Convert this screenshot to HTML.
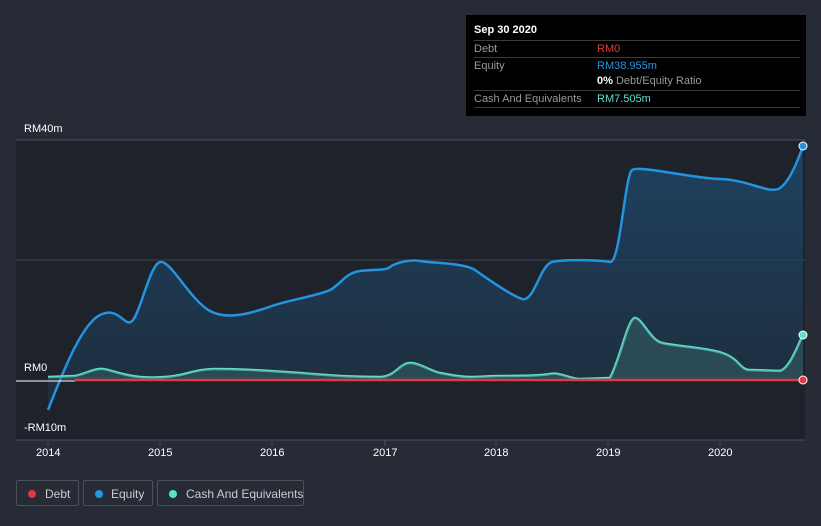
<!DOCTYPE html>
<html><head><style>
body{margin:0;background:#262b36;font-family:"Liberation Sans",sans-serif;}
.wrap{position:relative;width:821px;height:526px;overflow:hidden;background:#262b36;}
.lbl{position:absolute;color:#fff;font-size:11px;}
.tip{position:absolute;left:466px;top:15px;width:340px;height:101px;background:#000;color:#fff;font-size:11px;}
.tip .r{position:absolute;left:8px;right:6px;border-top:1px solid #3a3a3a;height:16px;}
.tip .k{position:absolute;left:0;top:2px;color:#999;}
.tip .v{position:absolute;left:123px;top:2px;}
.leg{position:absolute;top:480px;height:26px;border:1px solid #4a505c;border-radius:2px;color:#ccc;font-size:12px;line-height:26px;box-sizing:border-box;white-space:nowrap;}
.leg i{position:absolute;left:11px;top:9px;width:8px;height:8px;border-radius:50%;}
</style></head><body><div class="wrap">
<svg width="821" height="526" style="position:absolute;left:0;top:0">
<defs><linearGradient id="g" x1="0" y1="0" x2="0" y2="1"><stop offset="0" stop-color="#1e4a6e" stop-opacity=".8"/><stop offset="1" stop-color="#1e3a52" stop-opacity=".5"/></linearGradient></defs>
<rect x="16" y="140" width="789" height="300" fill="#1e222b"/>
<line x1="16" y1="140" x2="805" y2="140" stroke="#4a505c"/>
<line x1="16" y1="260" x2="805" y2="260" stroke="#3a404c"/>
<line x1="16" y1="440" x2="805" y2="440" stroke="#4a505c"/>
<path d="M48,410 C60,380 80,325 100,315 S125,330 133,320 S150,265 160,262 S190,300 210,311 S260,310 275,305 S320,295 330,290 S345,273 360,271 S385,271 390,267 S410,259 420,261 S465,263 475,270 S510,295 522,299 S540,265 552,262 S600,260 610,262 S625,175 632,170 S690,178 720,179 S770,195 780,188 S798,160 803,146 L803,380 L48,380 Z" fill="url(#g)"/>
<path d="M48,410 C60,380 80,325 100,315 S125,330 133,320 S150,265 160,262 S190,300 210,311 S260,310 275,305 S320,295 330,290 S345,273 360,271 S385,271 390,267 S410,259 420,261 S465,263 475,270 S510,295 522,299 S540,265 552,262 S600,260 610,262 S625,175 632,170 S690,178 720,179 S770,195 780,188 S798,160 803,146" fill="none" stroke="#2394df" stroke-width="2.5"/>
<path id="c" d="M48,377 L75,376 C85,374 95,368 103,369 S125,376 140,377 S170,377 180,375 S200,369 215,369 S260,370 300,373 S350,377 380,377 C395,377 400,363 410,363 S430,371 440,373 S460,377 470,377 S490,376 500,376 S540,376 550,374 S570,379 580,379 L610,378 C620,360 628,318 635,318 S650,340 662,343 S710,348 725,354 S740,370 750,370 L780,371 C790,368 798,345 803,335" fill="none" stroke="#5fe0cc" stroke-width="2.5"/>
<path d="M48,377 L75,376 C85,374 95,368 103,369 S125,376 140,377 S170,377 180,375 S200,369 215,369 S260,370 300,373 S350,377 380,377 C395,377 400,363 410,363 S430,371 440,373 S460,377 470,377 S490,376 500,376 S540,376 550,374 S570,379 580,379 L610,378 C620,360 628,318 635,318 S650,340 662,343 S710,348 725,354 S740,370 750,370 L780,371 C790,368 798,345 803,335 L803,380 L48,380 Z" fill="#3a6b6a" fill-opacity=".45"/>
<line x1="16" y1="381" x2="75" y2="381" stroke="#fff" stroke-width="1"/>
<line x1="75" y1="380" x2="803" y2="380" stroke="#e0393e" stroke-width="2.5"/>
<circle cx="803" cy="146" r="4" fill="#2394df" stroke="#fff" stroke-width="1"/>
<circle cx="803" cy="335" r="4" fill="#5fe0cc" stroke="#fff" stroke-width="1"/>
<circle cx="803" cy="380" r="4" fill="#e0393e" stroke="#fff" stroke-width="1"/>
<g stroke="#4a505c"><line x1="48" y1="440" x2="48" y2="446"/><line x1="160" y1="440" x2="160" y2="446"/><line x1="272" y1="440" x2="272" y2="446"/><line x1="385" y1="440" x2="385" y2="446"/><line x1="496" y1="440" x2="496" y2="446"/><line x1="608" y1="440" x2="608" y2="446"/><line x1="720" y1="440" x2="720" y2="446"/></g>
</svg>
<div class="lbl" style="left:24px;top:123px">RM40m</div>
<div class="lbl" style="left:24px;top:362px">RM0</div>
<div class="lbl" style="left:24px;top:422px">-RM10m</div>
<div class="lbl" style="left:36px;top:447px">2014</div>
<div class="lbl" style="left:148px;top:447px">2015</div>
<div class="lbl" style="left:260px;top:447px">2016</div>
<div class="lbl" style="left:373px;top:447px">2017</div>
<div class="lbl" style="left:484px;top:447px">2018</div>
<div class="lbl" style="left:596px;top:447px">2019</div>
<div class="lbl" style="left:708px;top:447px">2020</div>
<div class="tip">
<div style="position:absolute;left:8px;top:9px;font-weight:bold">Sep 30 2020</div>
<div class="r" style="top:25px"><span class="k">Debt</span><span class="v" style="color:#e0393e">RM0</span></div>
<div class="r" style="top:42px"><span class="k">Equity</span><span class="v" style="color:#2394df">RM38.955m</span></div>
<div style="position:absolute;left:131px;top:60px"><b>0%</b> <span style="color:#999">Debt/Equity Ratio</span></div>
<div class="r" style="top:75px"><span class="k">Cash And Equivalents</span><span class="v" style="color:#5fe0cc">RM7.505m</span></div>
<div class="r" style="top:92px"></div>
</div>
<div class="leg" style="left:16px;width:63px"><i style="background:#e0393e"></i><span style="position:absolute;left:28px">Debt</span></div>
<div class="leg" style="left:83px;width:70px"><i style="background:#2394df"></i><span style="position:absolute;left:27px">Equity</span></div>
<div class="leg" style="left:157px;width:147px"><i style="background:#5fe0cc"></i><span style="position:absolute;left:28px">Cash And Equivalents</span></div>
</div></body></html>
